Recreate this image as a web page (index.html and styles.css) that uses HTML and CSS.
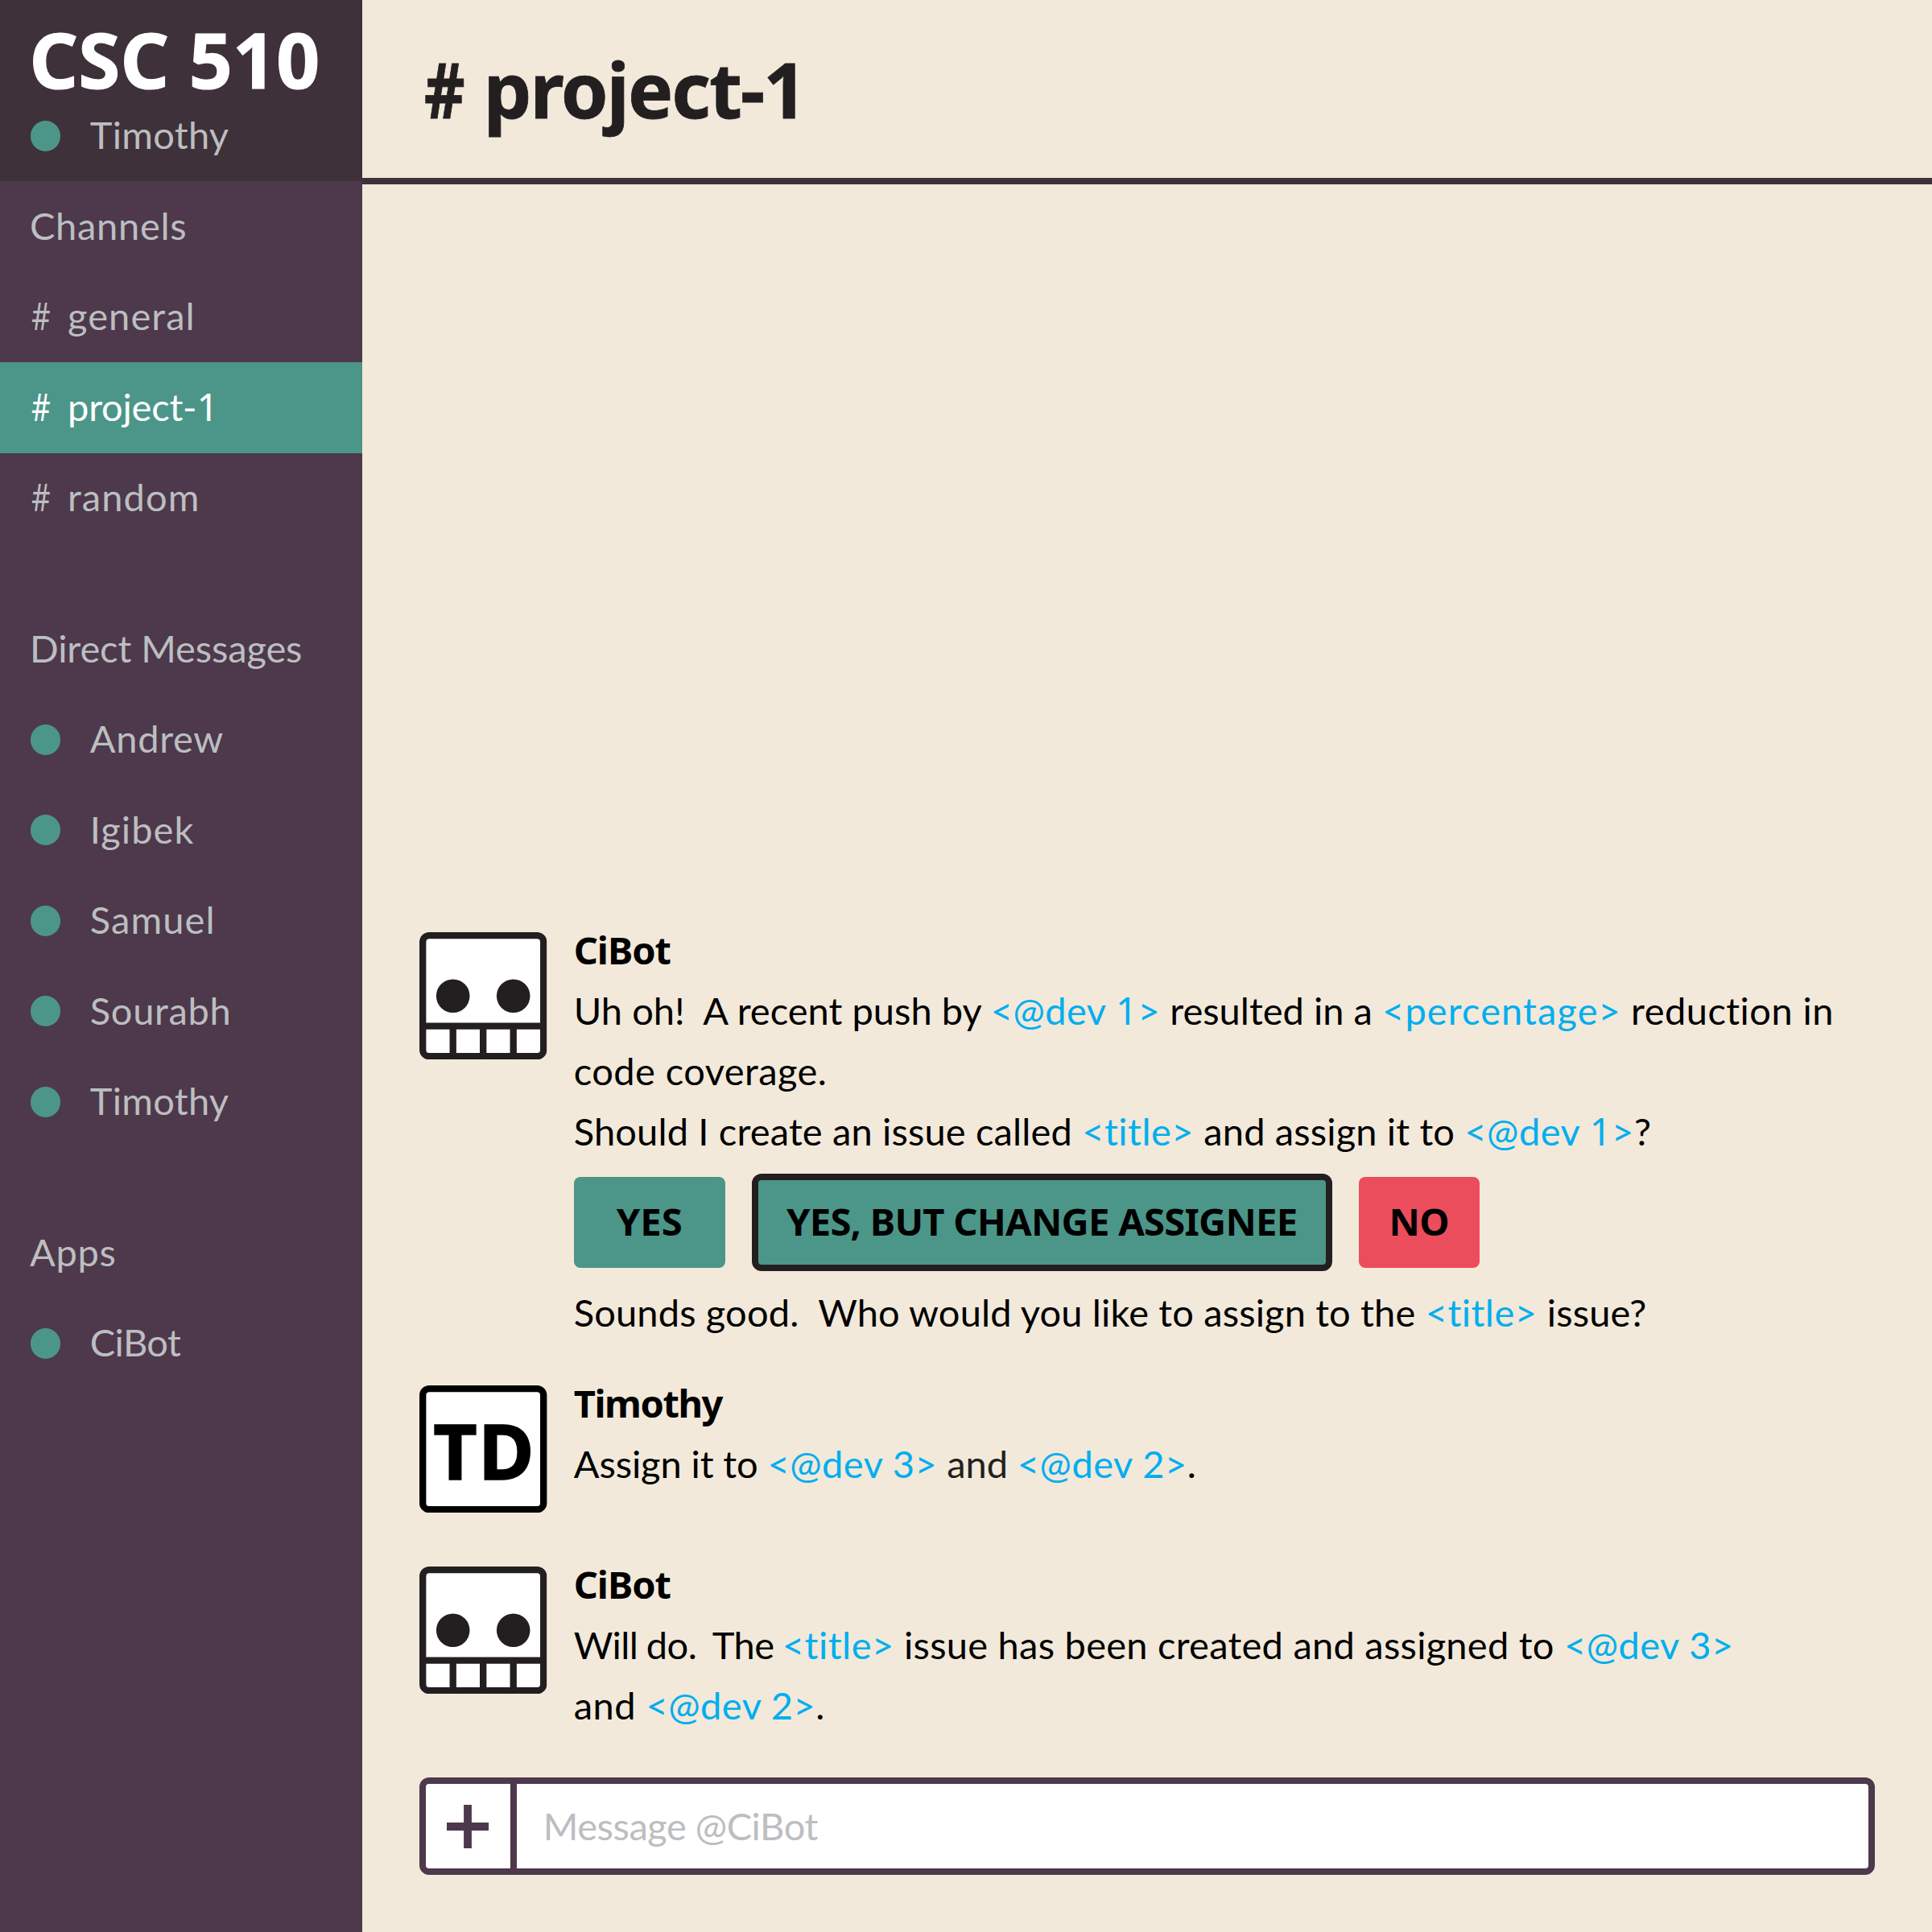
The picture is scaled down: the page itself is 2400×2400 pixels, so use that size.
FILE: index.html
```html
<!DOCTYPE html>
<html lang="en">
<head>
<meta charset="utf-8">
<title>CSC 510 - project-1</title>
<link rel="stylesheet" href="styles.css">
</head>
<body>
<svg class="defs" aria-hidden="true">
  <symbol id="bot" viewBox="0 0 158.4 158.4">
    <rect x="4.2" y="4.2" width="150" height="150" rx="8" fill="#fff" stroke="#231f20" stroke-width="8.33"/>
    <circle cx="41.7" cy="79.2" r="20.8" fill="#231f20"/>
    <circle cx="116.7" cy="79.2" r="20.8" fill="#231f20"/>
    <path d="M4.2 116.7H154.2M41.7 116.7V154.2M79.2 116.7V154.2M116.7 116.7V154.2" stroke="#231f20" stroke-width="8.33" fill="none"/>
  </symbol>
</svg>
<div class="app">
  <aside class="sidebar">
    <div class="team">
      <h1 class="team-name">CSC 510</h1>
      <div class="row"><span class="dot"></span><span class="label timothy">Timothy</span></div>
    </div>
    <div class="group">
      <div class="row heading"><span class="label">Channels</span></div>
      <div class="row"><span class="hash">#</span><span class="label loose">general</span></div>
      <div class="row active"><span class="hash">#</span><span class="label project">project-<span class="fig">1</span></span></div>
      <div class="row"><span class="hash">#</span><span class="label loose">random</span></div>
    </div>
    <div class="group">
      <div class="row heading"><span class="label dm">Direct Messages</span></div>
      <div class="row"><span class="dot"></span><span class="label">Andrew</span></div>
      <div class="row"><span class="dot"></span><span class="label loose">Igibek</span></div>
      <div class="row"><span class="dot"></span><span class="label loose">Samuel</span></div>
      <div class="row"><span class="dot"></span><span class="label">Sourabh</span></div>
      <div class="row"><span class="dot"></span><span class="label timothy">Timothy</span></div>
    </div>
    <div class="group">
      <div class="row heading"><span class="label">Apps</span></div>
      <div class="row"><span class="dot"></span><span class="label cibot">CiBot</span></div>
    </div>
  </aside>
  <main class="main">
    <header class="header"><h2 class="title"><span class="title-hash">#</span> project-1</h2></header>
    <section class="messages">
      <article class="message">
        <svg class="avatar"><use href="#bot"/></svg>
        <div class="body">
          <div class="name">CiBot</div>
          <p><span class="snug">Uh oh!&nbsp; A recent push by </span><span class="tag">&lt;@dev <span class="fig">1</span>&gt;</span><span class="snug"> resulted in a </span><span class="tag long">&lt;percentage&gt;</span> <span class="open">reduction in</span><br><span class="open">code coverage.</span></p>
          <p>Should I create an issue called <span class="tag">&lt;title&gt;</span> and assign it to <span class="tag">&lt;@dev <span class="fig">1</span>&gt;</span>?</p>
          <div class="actions">
            <button class="btn yes">YES</button>
            <button class="btn change">YES, BUT CHANGE ASSIGNEE</button>
            <button class="btn no">NO</button>
          </div>
          <p>Sounds good.&nbsp; Who would you like to assign to the <span class="tag">&lt;title&gt;</span> issue?</p>
        </div>
      </article>
      <article class="message reply">
        <svg class="avatar" viewBox="0 0 158.4 158.4">
          <rect x="4.2" y="4.2" width="150" height="150" rx="8" fill="#fff" stroke="#000" stroke-width="8.33"/>
          <text class="initials" x="80.5" y="117">TD</text>
        </svg>
        <div class="body">
          <div class="name wide">Timothy</div>
          <p class="close">Assign it to <span class="tag">&lt;@dev 3&gt;</span> <span class="soft">and</span> <span class="tag">&lt;@dev 2&gt;</span>.</p>
        </div>
      </article>
      <article class="message last">
        <svg class="avatar"><use href="#bot"/></svg>
        <div class="body">
          <div class="name">CiBot</div>
          <p class="roomy"><span class="tight">Will do.&nbsp; The </span><span class="tag">&lt;title&gt;</span> issue has been created and assigned to <span class="tag">&lt;@dev 3&gt;</span><br><span class="open">and </span><span class="tag">&lt;@dev 2&gt;</span>.</p>
        </div>
      </article>
    </section>
    <div class="composer">
      <div class="attach">
        <svg class="plus" viewBox="0 0 52 54"><path d="M26 0V54M0 27H52" stroke="#4d394b" stroke-width="9.8" fill="none"/></svg>
      </div>
      <div class="placeholder">Message @CiBot</div>
    </div>
  </main>
</div>
</body>
</html>
```
FILE: styles.css
```css
* { box-sizing: border-box; margin: 0; padding: 0; }

body {
  width: 2400px;
  height: 2400px;
  overflow: hidden;
  background: #f2e9da;
  color: #000;
  font: 400 47px/75px Lato, "Noto Sans", sans-serif;
  letter-spacing: 0.15px;
  font-variant-ligatures: none;
}

.defs { display: block; width: 0; height: 0; }

.app { display: flex; height: 2400px; }

/* Sidebar */
.sidebar { width: 450.3px; flex: none; background: #4d394b; color: #bcbec0; }
.team { height: 225px; background: #3e313a; }
.team-name {
  height: 112.5px;
  padding: 34px 0 0 36.5px;
  color: #fff;
  font: 700 94.4px/80px "Noto Sans", sans-serif;
  -webkit-text-stroke: 1.2px currentColor;
}
.row { display: flex; align-items: center; height: 112.5px; padding-left: 37.5px; line-height: 60px; white-space: pre; }
.row .label, .hash { padding-bottom: 2.8px; letter-spacing: 0.7px; }
.heading .label { margin-left: -0.5px; }
.row .dm { letter-spacing: -0.1px; }
.row .timothy { letter-spacing: 0.3px; }
.row .loose { letter-spacing: 1.1px; }
.row .cibot { letter-spacing: -0.6px; }
.row .project { letter-spacing: -0.2px; }
.group + .group { margin-top: 75px; }
.dot { width: 37.8px; height: 37.8px; margin-right: 36.5px; border-radius: 50%; background: #4c9689; }
.row .hash { width: 45px; margin: 0 0.5px 0 1px; font-family: "Noto Sans", sans-serif; letter-spacing: 0; transform: scaleX(0.78); transform-origin: left; }
.active { background: #4c9689; color: #fff; }
.fig { font-family: "Noto Sans", sans-serif; }

/* Channel */
.main { flex: 1; display: flex; flex-direction: column; padding-bottom: 71px; }
.header { display: flex; align-items: center; height: 229px; border-bottom: 8px solid #3e313a; padding: 0 0 0 77px; }
.title { color: #231f20; font: 700 94.4px/120px "Noto Sans", sans-serif; letter-spacing: -2px; -webkit-text-stroke: 0.8px currentColor; }
.title-hash { display: inline-block; margin-right: -8px; transform: scaleX(0.83); transform-origin: left; }
.messages { flex: 1; display: flex; flex-direction: column; justify-content: flex-end; padding: 0 40px 52px 71px; }
.message { display: flex; gap: 33px; }
.reply { margin-top: 37px; }
.last { margin-top: 50.6px; }
.avatar { flex: none; width: 158.4px; height: 158.4px; margin-top: 16px; }
.initials { font: 700 94.4px "Noto Sans", sans-serif; text-anchor: middle; letter-spacing: 1.5px; stroke: #000; stroke-width: 1.5px; }
.body { flex: 1; padding-top: 1px; white-space: nowrap; }
.name { font-family: "Noto Sans", sans-serif; font-weight: 700; letter-spacing: -1px; }
.wide { letter-spacing: -1.4px; }
.tag { color: #00aeef; letter-spacing: 0.5px; }
.long { letter-spacing: 1.1px; }
.snug { letter-spacing: 0.03px; }
.close { letter-spacing: -0.1px; }
.tight { letter-spacing: -0.57px; word-spacing: -1px; }
.roomy { letter-spacing: 0.25px; }
.open { letter-spacing: 0.45px; }
.soft { color: #231f20; }

.actions { display: flex; align-items: center; gap: 33px; height: 121px; margin: 15px 0 14px; }
.btn {
  height: 113px;
  padding-bottom: 2px;
  border: 0;
  border-radius: 8px;
  background: #4c9689;
  color: #000;
  font: 700 47.2px/75px "Noto Sans", sans-serif;
  letter-spacing: -0.77px;
}
.yes { width: 188px; letter-spacing: 0; }
.change { width: 721px; height: 121px; border: 8px solid #231f20; border-radius: 12px; }
.no { width: 150px; background: #eb4d5c; }

/* Composer */
.composer {
  display: flex;
  height: 121px;
  margin: 0 71px;
  border: 8px solid #4d394b;
  border-radius: 12px;
  background: #fff;
}
.attach { display: flex; align-items: center; justify-content: center; width: 112.5px; padding-right: 1px; border-right: 8px solid #4d394b; }
.plus { width: 52px; height: 54px; }
.placeholder { padding: 15px 0 0 33px; color: #bcbec0; letter-spacing: -0.46px; }
```
